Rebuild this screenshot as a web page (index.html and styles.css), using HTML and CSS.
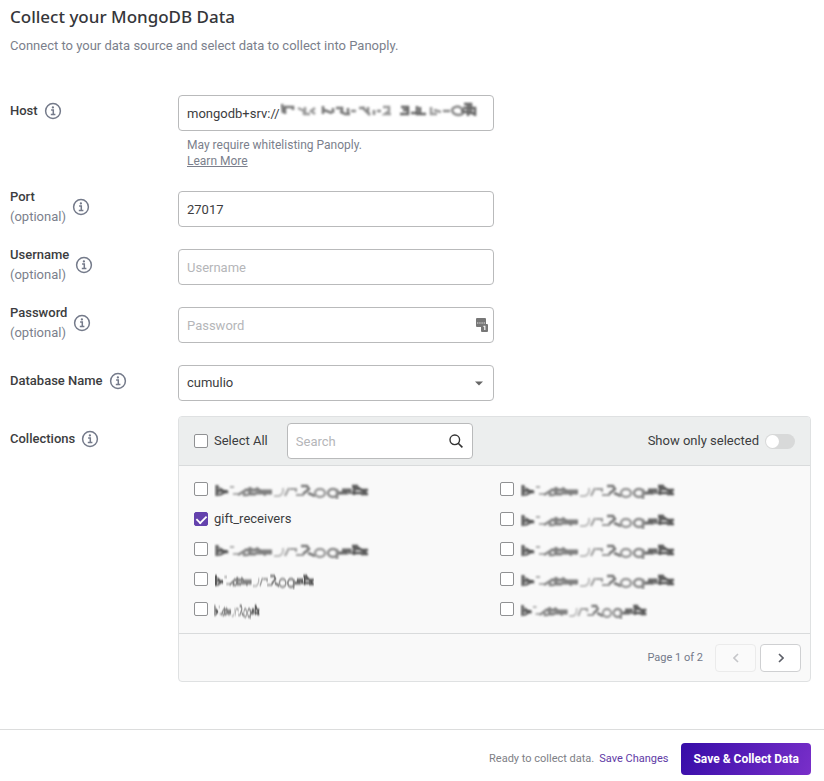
FILE: index.html
```html
<!DOCTYPE html>
<html lang="en">
<head>
<meta charset="utf-8">
<meta name="viewport" content="width=device-width, initial-scale=1">
<title>Collect your MongoDB Data</title>
<link rel="stylesheet" href="styles.css">
</head>
<body>
<svg class="sprite" aria-hidden="true">
  <symbol id="info" viewBox="0 0 18 18">
    <circle cx="9" cy="9" r="7.4" fill="none" stroke="currentColor" stroke-width="1.5"/>
    <circle cx="8.9" cy="5.4" r="1.15" fill="currentColor"/>
    <path d="M7.1 8h2.2v4.4M6.8 12.6h4.6" fill="none" stroke="currentColor" stroke-width="1.5"/>
  </symbol>
  <symbol id="redacted" viewBox="0 0 156 18" preserveAspectRatio="none">
    <filter id="soft" x="-5%" y="-20%" width="110%" height="140%"><feGaussianBlur stdDeviation="1"/></filter>
    <g filter="url(#soft)" fill="none" stroke="#555">
      <path d="M3 3v11" stroke-width="3"/>
      <path d="M4 9h9M5 13l9-4M5 6l9 5" stroke-width="2"/>
      <path d="M16 5h4M19 12h6" stroke="#aaa" stroke-width="2"/>
      <path d="M24 13l6-4v4h4" stroke="#888" stroke-width="2.5"/>
      <path d="M31 8h12M36 5v6M34 12h8M42 6l10 7M42 11h16M46 9h12" stroke="#808080" stroke-width="3"/>
      <path d="M60 14h5q5-2 4-8" stroke="#bbb" stroke-width="2"/>
      <path d="M71 14l4-8M76 7h6v3M82 13h8" stroke="#999" stroke-width="2"/>
      <path d="M87 4h6l2 3-6 5M94 11l7 3" stroke="#777" stroke-width="2.5"/>
      <ellipse cx="106" cy="11" rx="5" ry="4" stroke="#999" stroke-width="2.5"/>
      <ellipse cx="119" cy="11" rx="5" ry="4" stroke="#888" stroke-width="2.5"/>
      <path d="M123 7v10" stroke="#888" stroke-width="2.5"/>
      <path d="M125 11h9M128 8h8v4" stroke="#666" stroke-width="3"/>
      <path d="M138 4h6M139 7h8M140 4v9M138 11h10M147 12h7M147 8h7M143 5l9 6" stroke-width="2.5"/>
    </g>
  </symbol>
</svg>

<main class="page">
  <h1 class="title">Collect your MongoDB Data</h1>
  <p class="intro">Connect to your data source and select data to collect into Panoply.</p>

  <form class="form" id="source">
    <div class="row">
      <div class="name"><label for="host">Host</label><svg class="info"><use href="#info"/></svg></div>
      <div class="control">
        <div class="field">
          <input class="input" id="host" type="text" value="mongodb+srv://">
          <svg class="host-mask" viewBox="0 0 200 20" aria-hidden="true">
            <g filter="url(#soft)" fill="none" stroke="#777" stroke-width="2.5">
              <path d="M2 3l1 9M5 13V6h8v3" />
              <path d="M18 7l6 3v4M25 6v7h5M35 7l-4 3 4 3" stroke="#999"/>
              <path d="M43 5v8M44 9l8 3M53 7v5M56 7h6v6M60 10l5 3h5M68 7v5"/>
              <path d="M71 10h5M79 7h6M82 6l8 8M88 6v6M94 9v5M97 10h4" stroke="#888"/>
              <path d="M103 6h6v4l-4 3h6" stroke="#999"/>
              <path d="M121 6h7v7h-8M123 9h5M131 12h6M137 5v8h9M140 6v6" stroke="#666"/>
              <path d="M151 6v7h6M154 9l7 2" stroke="#999"/>
              <path d="M163 10h7M172 8q6-5 10 0t-3 6q-7 0-7-6" stroke="#888"/>
              <path d="M184 3h7v8M188 2v13M181 10l15 3M183 7h12v8" stroke="#666"/>
            </g>
          </svg>
        </div>
        <p class="hint">May require whitelisting Panoply.<br><a href="#whitelist">Learn More</a></p>
      </div>
    </div>

    <div class="row">
      <div class="name"><label for="port">Port<span class="optional">(optional)</span></label><svg class="info"><use href="#info"/></svg></div>
      <div class="control"><input class="input" id="port" type="text" value="27017"></div>
    </div>

    <div class="row">
      <div class="name"><label for="user">Username<span class="optional">(optional)</span></label><svg class="info"><use href="#info"/></svg></div>
      <div class="control"><input class="input" id="user" type="text" placeholder="Username"></div>
    </div>

    <div class="row">
      <div class="name"><label for="pass">Password<span class="optional">(optional)</span></label><svg class="info"><use href="#info"/></svg></div>
      <div class="control field">
        <input class="input" id="pass" type="password" placeholder="Password">
        <svg class="key-icon" viewBox="0 0 14 16" aria-hidden="true">
          <path d="M2 1h8q1 0 1 1v5H7v3H2q-1 0-1-1V2q0-1 1-1z" fill="#777"/>
          <path d="M2 6h8" stroke="#ddd" stroke-width="1.2" stroke-dasharray="1.4 .8"/>
          <rect x="6" y="7" width="7" height="8" rx="1" fill="#777"/>
          <path d="M8.4 9.4h1.4V13" fill="none" stroke="#eee" stroke-width="1.3"/>
        </svg>
      </div>
    </div>

    <div class="row">
      <div class="name"><label for="db">Database Name</label><svg class="info"><use href="#info"/></svg></div>
      <div class="control field">
        <select class="input" id="db"><option>cumulio</option></select>
        <svg class="caret" viewBox="0 0 8 5" aria-hidden="true"><path d="M0 .5h8L4 4.5z" fill="#666"/></svg>
      </div>
    </div>

    <div class="row row-wide">
      <div class="name name-tall"><span>Collections</span><svg class="info"><use href="#info"/></svg></div>
      <section class="panel" aria-label="Collections">
        <div class="panel-head">
          <label class="check"><input type="checkbox">Select All</label>
          <div class="field search">
            <input class="input" type="search" placeholder="Search" aria-label="Search collections">
            <svg class="search-icon" viewBox="0 0 14 14" aria-hidden="true"><circle cx="5.8" cy="5.8" r="4.8" fill="none" stroke="#333" stroke-width="1.4"/><path d="M9.2 9.2l4.2 4.2" stroke="#333" stroke-width="1.6"/></svg>
          </div>
          <label class="toggle">Show only selected<input type="checkbox" role="switch"></label>
        </div>
        <div class="list">
          <label class="check"><input type="checkbox" aria-label="Hidden collection"><svg class="mask"><use href="#redacted"/></svg></label>
          <label class="check"><input type="checkbox" aria-label="Hidden collection"><svg class="mask"><use href="#redacted"/></svg></label>
          <label class="check"><input type="checkbox" checked>gift_receivers</label>
          <label class="check"><input type="checkbox" aria-label="Hidden collection"><svg class="mask"><use href="#redacted"/></svg></label>
          <label class="check"><input type="checkbox" aria-label="Hidden collection"><svg class="mask"><use href="#redacted"/></svg></label>
          <label class="check"><input type="checkbox" aria-label="Hidden collection"><svg class="mask"><use href="#redacted"/></svg></label>
          <label class="check"><input type="checkbox" aria-label="Hidden collection"><svg class="mask mask-short"><use href="#redacted"/></svg></label>
          <label class="check"><input type="checkbox" aria-label="Hidden collection"><svg class="mask"><use href="#redacted"/></svg></label>
          <label class="check"><input type="checkbox" aria-label="Hidden collection"><svg class="mask mask-tiny"><use href="#redacted"/></svg></label>
          <label class="check"><input type="checkbox" aria-label="Hidden collection"><svg class="mask mask-medium"><use href="#redacted"/></svg></label>
        </div>
        <div class="pager">
          <span class="pages">Page 1 of 2</span>
          <button class="page-btn" type="button" aria-label="Previous page" disabled><svg viewBox="0 0 6 10"><path d="M5 1L1 5l4 4"/></svg></button>
          <button class="page-btn" type="button" aria-label="Next page"><svg viewBox="0 0 6 10"><path d="M1 1l4 4-4 4"/></svg></button>
        </div>
      </section>
    </div>
  </form>
</main>

<footer class="actions">
  <span class="status">Ready to collect data.</span>
  <a class="save" href="#save">Save Changes</a>
  <button class="primary" type="submit" form="source">Save &amp; Collect Data</button>
</footer>
</body>
</html>
```
FILE: styles.css
```css
* { box-sizing: border-box; }

body {
  margin: 0;
  background: #fff;
  color: #3c3d40;
  font: 13px/20px Roboto, "Liberation Sans", sans-serif;
}

input, select, button { font: inherit; color: inherit; }
.sprite { position: absolute; width: 0; height: 0; }

.page { padding: 5px 13px 47px 10px; }
.title {
  margin: 0;
  font: 500 17px/24px "Noto Sans", sans-serif;
  color: #35363a;
}
.intro { margin: 7px 0 39px; color: #7b7f8c; }

.form { display: flex; flex-direction: column; gap: 22px; }
.row { display: grid; grid-template-columns: 168px minmax(0, 316px); align-items: start; }
.row-wide { grid-template-columns: 168px minmax(0, 1fr); margin-top: -7px; }

.name { display: flex; align-items: center; gap: 6px; height: 32px; font-weight: 500; }
.name-tall { height: 45px; }
.optional { display: block; font-weight: 400; color: #7b7f8c; }
.info { width: 18px; height: 18px; color: #747a8a; }

.field { position: relative; }
.input {
  display: block;
  width: 100%;
  height: 36px;
  padding: 0 8px;
  border: 1px solid #b9babb;
  border-radius: 4px;
  background: #fff;
  appearance: none;
  outline: none;
}
.input::placeholder { color: #b5b6b9; opacity: 1; }
.host-mask { position: absolute; left: 102px; top: 6px; width: 200px; height: 20px; }
.key-icon { position: absolute; right: 5px; top: 10px; width: 14px; height: 16px; }
.caret { position: absolute; right: 11px; top: 16px; width: 8px; height: 5px; }

.hint { margin: 6px 9px 0; font-size: 12px; line-height: 16px; color: #7b7f8c; }
.hint a { color: inherit; }

.panel { border: 1px solid #dfe1e2; border-radius: 4px; background: #f9f9f9; }
.panel-head {
  display: flex;
  align-items: center;
  height: 49px;
  padding: 0 15px;
  border-bottom: 1px solid #d9dbdc;
  border-radius: 3px 3px 0 0;
  background: #eceeee;
}
.check { display: flex; align-items: center; gap: 6px; height: 30px; }
.check input {
  display: grid;
  place-items: center;
  flex: none;
  width: 14px;
  height: 14px;
  margin: 0;
  border: 1px solid #909193;
  border-radius: 2px;
  background: #fff;
  appearance: none;
}
.check input:checked { border-color: #6442ad; background: #6442ad; }
.check input:checked::after {
  content: "";
  width: 9px;
  height: 5px;
  border: solid #fff;
  border-width: 0 0 2px 2px;
  transform: translateY(-1px) rotate(-45deg) scale(0.9);
}
.search { width: 186px; margin-left: 19px; }
.search-icon { position: absolute; right: 10px; top: 11px; width: 14px; height: 14px; }

.toggle { display: flex; align-items: center; gap: 6px; margin-left: auto; }
.toggle input {
  width: 30px;
  height: 15px;
  margin: 0;
  padding: 1px;
  border-radius: 8px;
  background: #d8d9d9;
  appearance: none;
}
.toggle input::before {
  content: "";
  display: block;
  width: 13px;
  height: 13px;
  border-radius: 50%;
  background: #fff;
}

.list {
  display: grid;
  grid-template-columns: 1fr 1fr;
  column-gap: 11px;
  padding: 8px 15px 9px;
  border-bottom: 1px solid #d9dbdc;
}
.mask { width: 156px; height: 18px; margin-top: 4px; }
.mask-medium { width: 128px; }
.mask-short { width: 101px; }
.mask-tiny { width: 46px; }

.pager { display: flex; align-items: center; justify-content: flex-end; gap: 4px; height: 47px; padding: 0 9px; }
.pages { margin-right: 8px; font-size: 11px; color: #747a8a; }
.page-btn {
  display: grid;
  place-items: center;
  width: 41px;
  height: 28px;
  padding: 0;
  border: 1px solid #cfd0d2;
  border-radius: 4px;
  background: #fff;
  color: #5d6069;
}
.page-btn:disabled { border-color: #ebebeb; background: #fafafa; color: #c5c6c9; }
.page-btn svg { width: 6px; height: 10px; fill: none; stroke: currentColor; stroke-width: 1.6; }

.actions {
  display: flex;
  align-items: center;
  justify-content: flex-end;
  padding: 13px 13px 6px;
  border-top: 1px solid #dcdddd;
  font-size: 11px;
}
.status { color: #7e8086; }
.save { margin: 0 13px 0 5px; color: #6039a5; text-decoration: none; }
.primary {
  height: 32px;
  padding: 0 12px;
  border: 0;
  border-radius: 4px;
  background: linear-gradient(115deg, #360ca8, #792fc9);
  color: #fff;
  font-size: 12px;
  font-weight: 700;
}
```
